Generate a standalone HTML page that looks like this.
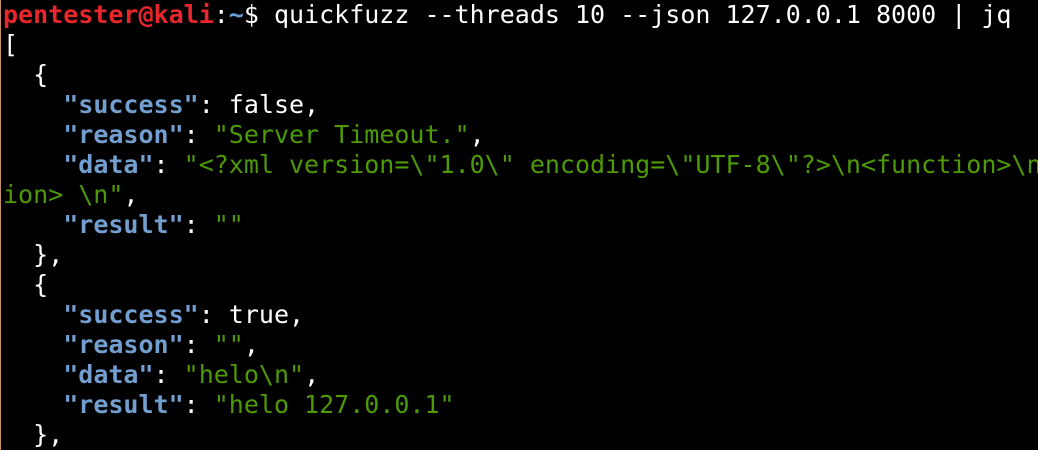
<!DOCTYPE html>
<html><head><meta charset="utf-8"><style>
html,body{margin:0;padding:0;background:#000;}
body{width:1038px;height:450px;overflow:hidden;position:relative;}
.b{position:absolute;left:0;top:0;width:1px;height:450px;background:#c8906a;}
pre{margin:0;padding:0 0 0 3px;font-family:"DejaVu Sans Mono","Liberation Mono",monospace;font-size:25px;line-height:30px;color:#fff;white-space:pre;overflow:hidden;width:1035px;}
.r{color:#e8262c;font-weight:bold}
.t{color:#6a9fd4;font-weight:bold}
.k{color:#729fcf;font-weight:bold}
.s{color:#4e9a06}
</style></head><body><div class="b"></div><pre><span class="r">pentester@kali</span>:<span class="t">~</span>$ quickfuzz --threads 10 --json 127.0.0.1 8000 | jq
[
  {
    <span class="k">"success"</span>: false,
    <span class="k">"reason"</span>: <span class="s">"Server Timeout."</span>,
    <span class="k">"data"</span>: <span class="s">"&lt;?xml version=\"1.0\" encoding=\"UTF-8\"?&gt;\n&lt;function&gt;\n</span>
<span class="s">ion&gt; \n"</span>,
    <span class="k">"result"</span>: <span class="s">""</span>
  },
  {
    <span class="k">"success"</span>: true,
    <span class="k">"reason"</span>: <span class="s">""</span>,
    <span class="k">"data"</span>: <span class="s">"helo\n"</span>,
    <span class="k">"result"</span>: <span class="s">"helo 127.0.0.1"</span>
  },
</pre></body></html>
